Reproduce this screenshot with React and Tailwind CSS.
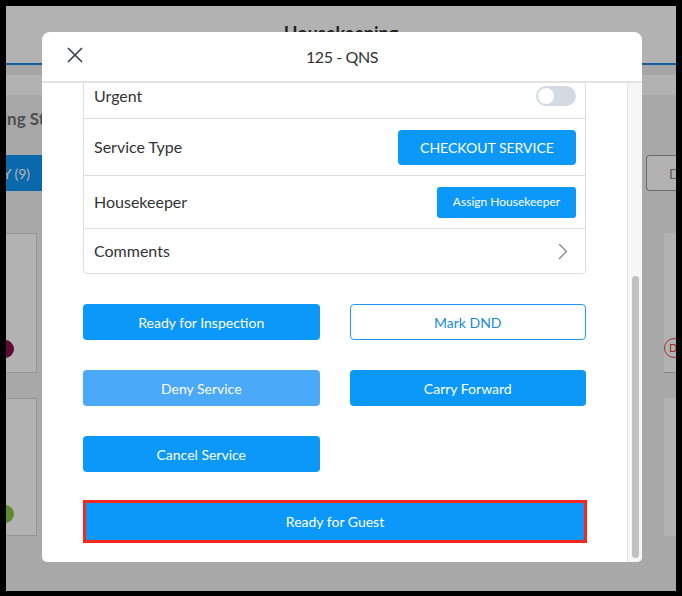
import React from 'react';

const font = { fontFamily: 'Lato, "Noto Sans", sans-serif' };

function CloseIcon() {
  return (
    <svg width="16" height="16" viewBox="0 0 16 16" fill="none" stroke="#3a4650" strokeWidth="1.7" strokeLinecap="round">
      <line x1="1.5" y1="1.5" x2="14.5" y2="14.5" />
      <line x1="14.5" y1="1.5" x2="1.5" y2="14.5" />
    </svg>
  );
}

function Chevron() {
  return (
    <svg width="10" height="17" viewBox="0 0 10 17" fill="none" stroke="#8a8a8a" strokeWidth="1.4" strokeLinecap="round" strokeLinejoin="round">
      <polyline points="1.5,1.5 8.5,8.5 1.5,15.5" />
    </svg>
  );
}

function Background() {
  return (
    <div className="flex flex-col h-full bg-[#f1f1f1]">
      <div className="h-[57px] bg-white flex justify-center pt-[14px]">
        <span className="text-[18px] font-bold text-[#333]">Housekeeping</span>
      </div>
      <div className="h-[2px] bg-[#1a8ae6]" />
      <div className="h-[10px] bg-[#ececec]" />
      <div className="h-[20px] bg-white" />
      <div className="h-[48px] flex items-center overflow-hidden">
        <span className="-ml-[46px] text-[17px] font-bold text-[#707070] whitespace-nowrap">Cleaning Status</span>
      </div>
      <div className="h-[36px] mt-[12px] flex justify-between items-stretch">
        <div className="w-[36px] bg-[#0f96f7] flex items-center justify-end overflow-hidden pr-[12px]">
          <span className="text-[14px] text-white whitespace-nowrap">DIRTY (9)</span>
        </div>
        <div className="w-[30px] bg-white border border-[#9a9a9a] rounded-l-[4px] border-r-0 flex items-center pl-[22px]">
          <span className="text-[14px] text-[#888]">D</span>
        </div>
      </div>
      <div className="flex justify-between mt-[42px]">
        <div className="flex flex-col gap-[25px] w-[31px]">
          <div className="h-[140px] bg-white border border-[#d6d6d6] border-l-0 flex flex-col justify-end pb-[14px] overflow-hidden">
            <div className="w-[18px] h-[18px] rounded-full bg-[#8a0e4e] -ml-[10px]" />
          </div>
          <div className="h-[138px] bg-white border border-[#d6d6d6] border-l-0 flex flex-col justify-end pb-[12px] overflow-hidden">
            <div className="w-[18px] h-[18px] rounded-full bg-[#8bc34a] -ml-[10px]" />
          </div>
        </div>
        <div className="flex flex-col gap-[25px] w-[12px]">
          <div className="h-[140px] bg-white border-b border-[#bdbdbd] flex flex-col justify-end pb-[14px] overflow-hidden">
            <div className="w-[20px] h-[20px] shrink-0 rounded-full border border-[#e0453a] flex items-center pl-[4px]">
              <span className="text-[11px] text-[#e0453a]">D</span>
            </div>
          </div>
          <div className="h-[138px] bg-white" />
        </div>
      </div>
    </div>
  );
}

function Row({ label, children, height, last }) {
  return (
    <div className={`flex items-center justify-between pl-[10px] pr-[9px] ${last ? '' : 'border-b border-[#dcdcdc]'} ${height}`}>
      <span className="text-[16px] text-[#333]">{label}</span>
      {children}
    </div>
  );
}

function ActionButton({ children, variant = 'solid' }) {
  const styles = {
    solid: 'bg-[#0b98f8] text-white',
    light: 'bg-[#4aa9f8] text-white',
    outline: 'bg-white border border-[#1b9af7] text-[#1a8bd4]',
  };
  return (
    <button className={`h-[36px] rounded-[4px] flex items-center justify-center text-[14px] ${styles[variant]}`}>
      {children}
    </button>
  );
}

function Modal() {
  return (
    <div className="absolute left-[36px] top-[26px] w-[600px] h-[530px] bg-white rounded-t-[8px] rounded-b-[5px] flex flex-col overflow-hidden">
      <div className="relative h-[51px] shrink-0 border-b-2 border-[#e3e3e3] flex items-center justify-center">
        <button className="absolute left-[25px] top-[15px]">
          <CloseIcon />
        </button>
        <span className="text-[16px] text-[#333] tracking-[-0.4px]">125 - QNS</span>
      </div>
      <div className="flex-1 flex min-h-0">
        <div className="flex-1 overflow-hidden px-[41px]">
          <div className="-mt-[10px] border border-[#dcdcdc] rounded-[4px]">
            <Row label="Urgent" height="h-[45px]">
              <div className="w-[40px] h-[20px] rounded-full bg-[#d5d9e2] p-[2px] flex items-center">
                <div className="w-[16px] h-[16px] rounded-full bg-white" />
              </div>
            </Row>
            <Row label="Service Type" height="h-[57px]">
              <button className="w-[178px] h-[35px] rounded-[4px] bg-[#0b98f8] text-white text-[14px]">
                CHECKOUT SERVICE
              </button>
            </Row>
            <Row label="Housekeeper" height="h-[53px]">
              <button className="w-[139px] h-[31px] rounded-[3px] bg-[#0b98f8] text-white text-[12px]">
                Assign Housekeeper
              </button>
            </Row>
            <Row label="Comments" height="h-[44px]" last>
              <div className="pr-[8px] flex items-center">
                <Chevron />
              </div>
            </Row>
          </div>
          <div className="grid grid-cols-2 gap-x-[30px] gap-y-[30px] mt-[30px]">
            <ActionButton>Ready for Inspection</ActionButton>
            <ActionButton variant="outline">Mark DND</ActionButton>
            <ActionButton variant="light">Deny Service</ActionButton>
            <ActionButton>Carry Forward</ActionButton>
            <ActionButton>Cancel Service</ActionButton>
          </div>
          <button className="mt-[28px] w-[504px] h-[43px] border-[3px] border-[#f4291c] bg-[#0b98f8] text-white text-[14px] flex items-center justify-center">
            Ready for Guest
          </button>
        </div>
        <div className="w-[15px] shrink-0 border-l border-[#e4e4e4] bg-[#f6f6f6] flex flex-col items-center pt-[193px] pb-[4px]">
          <div className="w-[7px] flex-1 rounded-full bg-[#c1c1c1]" />
        </div>
      </div>
    </div>
  );
}

export default function App() {
  return (
    <div className="w-[682px] h-[596px] bg-black pt-[6px] pl-[6px] pr-[6px] pb-[5px] overflow-hidden" style={font}>
      <div className="relative w-full h-full overflow-hidden">
        <Background />
        <div className="absolute inset-0 bg-black/30" />
        <Modal />
      </div>
    </div>
  );
}
